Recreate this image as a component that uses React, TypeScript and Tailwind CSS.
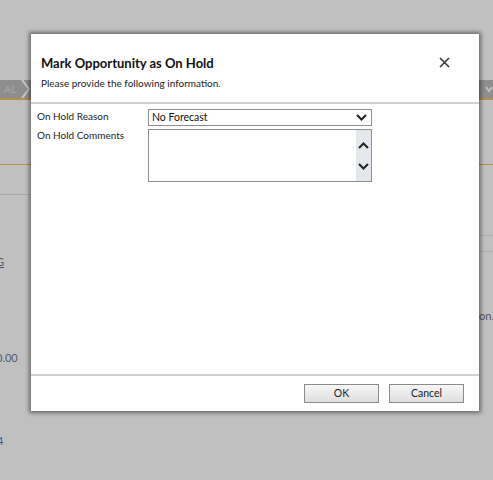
import React from 'react';

const Chevron: React.FC<{ up?: boolean; className?: string }> = ({ up, className }) => (
  <svg width="11" height="7" viewBox="0 0 11 7" className={className}>
    <path
      d={up ? 'M1 6 L5.5 1.5 L10 6' : 'M1 1 L5.5 5.5 L10 1'}
      fill="none"
      stroke="#222"
      strokeWidth="2"
    />
  </svg>
);

const App: React.FC = () => {
  return (
    <div
      className="relative w-[493px] h-[480px] overflow-hidden bg-[#c0c0c0]"
      style={{ fontFamily: 'Lato, "Open Sans", sans-serif' }}
    >
      {/* Background page behind the modal */}
      <div className="flex flex-col">
        <div className="h-[80px]" />
        <div className="h-[18px] bg-[#8e8e8e] flex items-center justify-between pl-1">
          <div className="flex items-center gap-1">
            <span className="text-[10px] text-[#a3a3a3] font-bold">AL</span>
            <svg width="10" height="18" viewBox="0 0 10 18">
              <path d="M2 0 L9 9 L2 18" fill="none" stroke="#c8c8c8" strokeWidth="2" />
            </svg>
          </div>
          <div className="flex items-center gap-1">
            <svg width="8" height="18" viewBox="0 0 8 18">
              <path d="M1 4 L5 9 L1 14" fill="none" stroke="#bdbdbd" strokeWidth="2" />
            </svg>
            <svg width="8" height="18" viewBox="0 0 8 18">
              <path d="M1 7 L4 11 L7 7" fill="none" stroke="#bdbdbd" strokeWidth="2" />
            </svg>
          </div>
        </div>
        <div className="h-[2px] bg-[#b58f45]" />
        <div className="h-[64px]" />
        <div className="h-[1px] bg-[#b58f45]" />
        <div className="h-[29px]" />
        <div className="h-[1px] bg-[#a9a9a9] w-[30px]" />
        <div className="h-[41px] flex justify-end">
          <div className="w-[14px] border-b border-[#acacac]" />
        </div>
        <div className="h-[16px] flex justify-end">
          <div className="w-[14px] border-b border-[#acacac]" />
        </div>
        <div className="flex items-start h-[56px] pt-[2px]">
          <span className="text-[11px] text-[#4a5a6e] underline -ml-[4px]">G</span>
        </div>
        <div className="flex justify-end h-[30px]">
          <span className="text-[11px] text-[#555] -mr-[1px]">on.</span>
        </div>
        <div className="h-[12px]" />
        <span className="text-[11px] text-[#4a5a6e] -ml-[4px]">0.00</span>
        <div className="h-[66px]" />
        <span className="text-[11px] text-[#3a5f9e] -ml-[3px]">4</span>
      </div>

      {/* Modal dialog */}
      <div className="absolute left-[31px] top-[34px] w-[448px] h-[377px] bg-white flex flex-col shadow-[0_0_4px_2px_rgba(0,0,0,0.45)]">
        <div className="h-[68px] flex items-start justify-between pl-[10px] pr-[29px] pt-[19px]">
          <div className="flex flex-col">
            <h1 className="text-[13px] font-bold text-[#111] leading-[20px]">
              Mark Opportunity as On Hold
            </h1>
            <p className="text-[10px] text-[#222] leading-[14px] mt-[3px]">
              Please provide the following information.
            </p>
          </div>
          <svg width="11" height="11" viewBox="0 0 11 11" className="mt-[4px]">
            <path d="M1 1 L10 10 M10 1 L1 10" stroke="#333" strokeWidth="1.5" />
          </svg>
        </div>
        <div className="h-[2px] bg-[#d2d2d2]" />

        <div className="grid grid-cols-[111px_224px] gap-y-[3px] pl-[6px] pt-[5px]">
          <label className="text-[10px] text-[#222] leading-[15px]">On Hold Reason</label>
          <div className="h-[17px] border border-[#8f8f8f] flex items-center justify-between pl-[3px] pr-[4px]">
            <span className="text-[10.5px] text-[#111] leading-[15px]">No Forecast</span>
            <Chevron />
          </div>
          <label className="text-[10px] text-[#222] leading-[15px] -mt-[1px]">On Hold Comments</label>
          <div className="h-[53px] border border-[#8f8f8f] flex justify-end">
            <div className="w-[15px] bg-[#e4e8ec] flex flex-col items-center justify-center gap-[14px]">
              <Chevron up />
              <Chevron />
            </div>
          </div>
        </div>

        <div className="flex-1" />
        <div className="h-[2px] bg-[#d2d2d2]" />
        <div className="h-[35px] flex justify-end items-start gap-[10px] pr-[15px] pt-[8px]">
          <button className="w-[75px] h-[19px] border border-[#8a8a8a] bg-gradient-to-b from-[#f7f7f7] to-[#dedede] text-[10.5px] text-[#222] leading-[15px]">
            OK
          </button>
          <button className="w-[75px] h-[19px] border border-[#8a8a8a] bg-gradient-to-b from-[#f7f7f7] to-[#dedede] text-[10.5px] text-[#222] leading-[15px]">
            Cancel
          </button>
        </div>
      </div>
    </div>
  );
};

export default App;
